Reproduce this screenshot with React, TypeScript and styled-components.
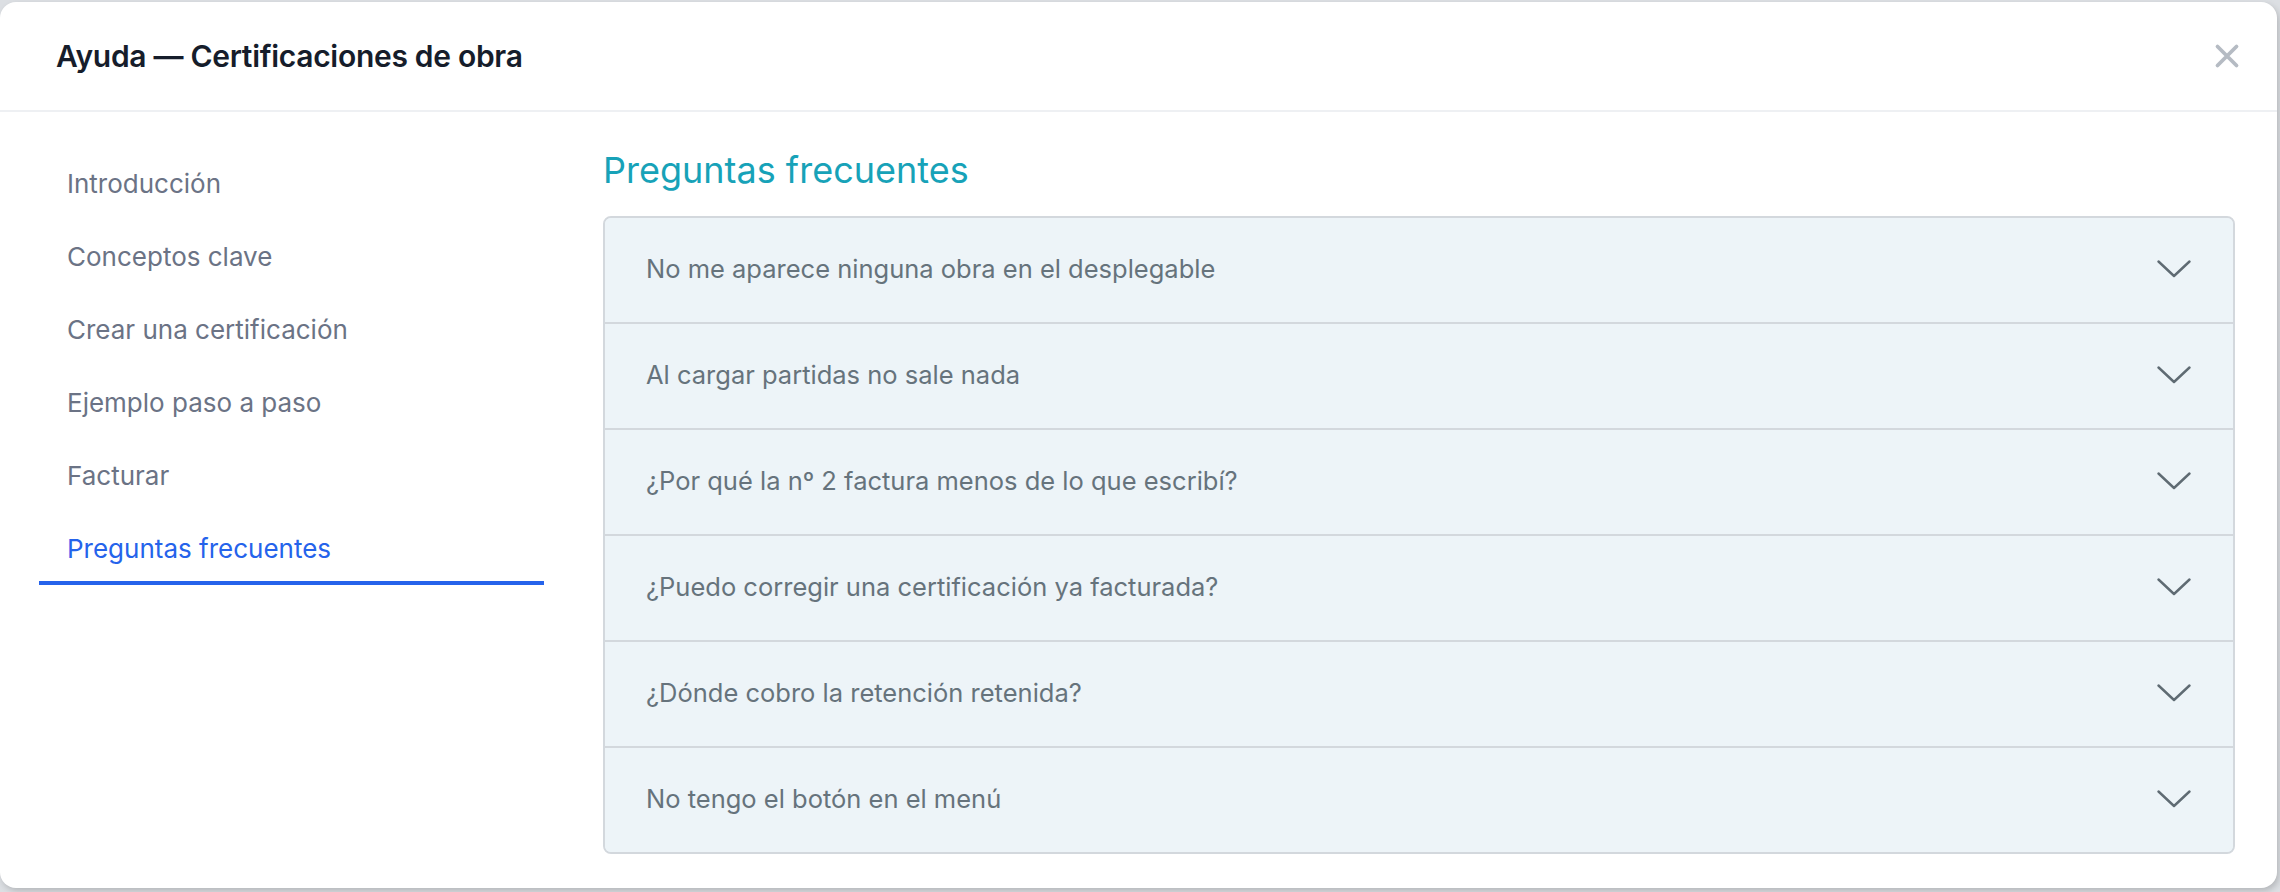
import styled, { createGlobalStyle } from "styled-components";

const GlobalStyle = createGlobalStyle`
  * {
    box-sizing: border-box;
  }

  html,
  body {
    margin: 0;
    height: 100%;
  }

  body {
    background: #dcdfe3;
    font-family: Inter, "Noto Sans", "Liberation Sans", sans-serif;
    padding: 2px 3px 4px 0;
  }

  #root {
    height: 100%;
  }
`;

const sections = [
  "Introducción",
  "Conceptos clave",
  "Crear una certificación",
  "Ejemplo paso a paso",
  "Facturar",
  "Preguntas frecuentes",
];

const questions = [
  "No me aparece ninguna obra en el desplegable",
  "Al cargar partidas no sale nada",
  "¿Por qué la nº 2 factura menos de lo que escribí?",
  "¿Puedo corregir una certificación ya facturada?",
  "¿Dónde cobro la retención retenida?",
  "No tengo el botón en el menú",
];

function App() {
  const active = "Preguntas frecuentes";

  return (
    <>
      <GlobalStyle />
      <Modal role="dialog" aria-labelledby="help-title">
        <ModalHeader>
          <ModalTitle id="help-title">Ayuda — Certificaciones de obra</ModalTitle>
          <CloseButton type="button" aria-label="Cerrar">
            <svg width="26" height="26" viewBox="0 0 26 26" fill="none">
              <path
                d="M3.5 3.5L22.5 22.5M22.5 3.5L3.5 22.5"
                stroke="currentColor"
                strokeWidth="3.8"
                strokeLinecap="round"
              />
            </svg>
          </CloseButton>
        </ModalHeader>
        <ModalBody>
          <SideNav>
            {sections.map((s) => (
              <NavItem key={s} $active={s === active}>
                {s}
              </NavItem>
            ))}
          </SideNav>
          <Content>
            <SectionTitle>Preguntas frecuentes</SectionTitle>
            <Accordion>
              {questions.map((q) => (
                <AccordionRow key={q} type="button">
                  <span>{q}</span>
                  <Chevron width="34" height="18" viewBox="0 0 34 18" fill="none">
                    <path
                      d="M1.5 1.5L17 16L32.5 1.5"
                      stroke="currentColor"
                      strokeWidth="2.4"
                      strokeLinecap="round"
                      strokeLinejoin="round"
                    />
                  </Chevron>
                </AccordionRow>
              ))}
            </Accordion>
          </Content>
        </ModalBody>
      </Modal>
    </>
  );
}

const Modal = styled.div`
  height: 100%;
  background: #ffffff;
  border-radius: 16px;
  box-shadow: 2px 3px 6px rgba(0, 0, 0, 0.18);
  display: flex;
  flex-direction: column;
  overflow: hidden;
`;

const ModalHeader = styled.header`
  height: 110px;
  flex: none;
  display: flex;
  align-items: center;
  justify-content: space-between;
  padding: 0 37px 0 56px;
  border-bottom: 2px solid #eef0f3;
`;

const ModalTitle = styled.h2`
  margin: 0;
  font-size: 30px;
  font-weight: 600;
  color: #161d2b;
  letter-spacing: -0.01em;
`;

const CloseButton = styled.button`
  border: 0;
  background: transparent;
  padding: 0;
  color: #b5bbc3;
  display: grid;
  place-items: center;
  cursor: pointer;
`;

const ModalBody = styled.div`
  flex: 1;
  display: flex;
  gap: 59px;
  padding: 35px 42px 0 39px;
`;

const SideNav = styled.nav`
  width: 505px;
  flex: none;
  display: flex;
  flex-direction: column;
`;

const NavItem = styled.a<{ $active?: boolean }>`
  height: 73px;
  display: flex;
  align-items: center;
  padding: 4px 0 0 28px;
  font-size: 26px;
  color: ${({ $active }) => ($active ? "#2563eb" : "#6b7385")};
  border-bottom: 4px solid
    ${({ $active }) => ($active ? "#2563eb" : "transparent")};
  cursor: pointer;
`;

const Content = styled.section`
  flex: 1;
  display: flex;
  flex-direction: column;
`;

const SectionTitle = styled.h3`
  margin: 2px 0 25px;
  font-size: 36px;
  line-height: 42px;
  font-weight: 400;
  color: #17a2b8;
`;

const Accordion = styled.div`
  border: 2px solid #d3d8dd;
  border-radius: 8px;
  overflow: hidden;
  background: #edf4f8;
`;

const AccordionRow = styled.button`
  width: 100%;
  height: 106px;
  display: flex;
  align-items: center;
  justify-content: space-between;
  padding: 0 42px 3px 41px;
  border: 0;
  border-top: 2px solid #d3d8dd;
  background: #edf4f8;
  font-family: inherit;
  font-size: 25.5px;
  color: #66737c;
  text-align: left;
  cursor: pointer;

  &:first-child {
    border-top: 0;
    height: 104px;
  }
`;

const Chevron = styled.svg`
  flex: none;
  color: #5f6b73;
`;

export default App;
